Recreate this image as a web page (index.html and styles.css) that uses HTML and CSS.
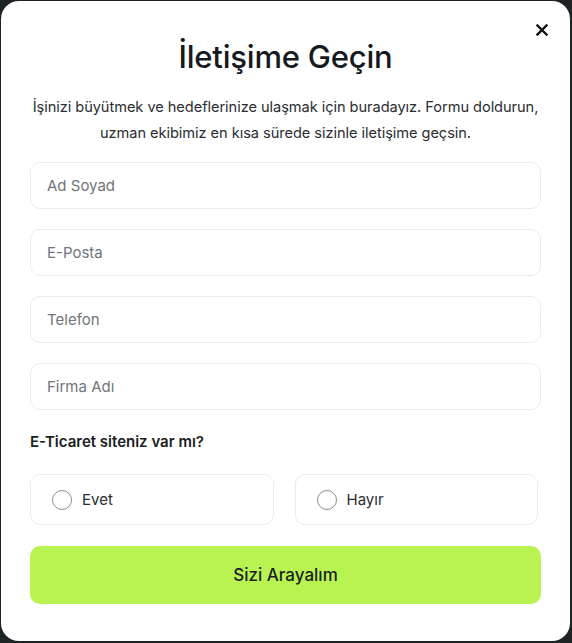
FILE: index.html
```html
<!DOCTYPE html>
<html lang="tr">
<head>
<meta charset="utf-8">
<link rel="stylesheet" href="styles.css">
</head>
<body>
<div class="modal">
  <button class="close" aria-label="Kapat">
    <svg width="12" height="12" viewBox="0 0 12 12"><path d="M1.5 1.5L10.5 10.5M10.5 1.5L1.5 10.5" stroke="#111" stroke-width="2.4" stroke-linecap="square"/></svg>
  </button>
  <h1 class="title">İletişime Geçin</h1>
  <p class="lead">İşinizi büyütmek ve hedeflerinize ulaşmak için buradayız. Formu doldurun, uzman ekibimiz en kısa sürede sizinle iletişime geçsin.</p>
  <form class="form">
    <input class="field" type="text" placeholder="Ad Soyad">
    <input class="field" type="email" placeholder="E-Posta">
    <input class="field" type="tel" placeholder="Telefon">
    <input class="field" type="text" placeholder="Firma Adı">
    <div class="question">E-Ticaret siteniz var mı?</div>
    <div class="choices">
      <label class="choice"><span class="radio"></span><span>Evet</span></label>
      <label class="choice"><span class="radio"></span><span>Hayır</span></label>
    </div>
    <button type="button" class="submit">Sizi Arayalım</button>
  </form>
</div>
</body>
</html>
```
FILE: styles.css
```css
html, body {
  margin: 0;
  padding: 0;
  height: 100%;
}
body {
  background: #1e2326;
  font-family: Inter, "Noto Sans", sans-serif;
  color: #1a1d21;
  padding: 1px 2px 2px 1px;
  box-sizing: border-box;
}
.modal {
  position: relative;
  background: #fff;
  border-radius: 18px;
  height: 100%;
  box-sizing: border-box;
  padding: 32px 29px 0 29px;
}
.close {
  position: absolute;
  top: 22px;
  right: 21px;
  width: 14px;
  height: 14px;
  padding: 0;
  border: 0;
  background: none;
  display: flex;
  align-items: center;
  justify-content: center;
}
.title {
  margin: 0;
  text-align: center;
  font-size: 31px;
  font-weight: 500;
  line-height: 48px;
  letter-spacing: -0.2px;
  color: #16191d;
}
.lead {
  margin: 13px -8px 0;
  text-align: center;
  font-size: 14.6px;
  line-height: 26px;
  letter-spacing: -0.05px;
  color: #2a2d31;
}
.form {
  margin-top: 16px;
  display: flex;
  flex-direction: column;
}
.field {
  height: 47px;
  box-sizing: border-box;
  border: 1px solid #ebebeb;
  border-radius: 10px;
  padding: 0 16px;
  font-family: inherit;
  font-size: 15px;
  color: #222;
  margin-bottom: 20px;
  outline: none;
}
.field::placeholder {
  color: #71757a;
}
.question {
  margin-top: 1px;
  font-size: 15px;
  font-weight: 600;
  color: #1a1d21;
  line-height: 22px;
}
.choices {
  margin-top: 21px;
  display: grid;
  grid-template-columns: 1fr 1fr;
  gap: 21px;
  padding-right: 3px;
}
.choice {
  height: 51px;
  box-sizing: border-box;
  border: 1px solid #ebebeb;
  border-radius: 10px;
  display: flex;
  align-items: center;
  gap: 10px;
  padding-left: 21px;
  font-size: 15px;
  color: #2a2d31;
}
.radio {
  width: 20px;
  height: 20px;
  border: 1px solid #8a8d91;
  border-radius: 50%;
  box-sizing: border-box;
}
.submit {
  margin-top: 21px;
  height: 58px;
  border: 0;
  border-radius: 10px;
  background: #b9f352;
  font-family: inherit;
  font-size: 17px;
  font-weight: 500;
  color: #1a1d21;
}
```
